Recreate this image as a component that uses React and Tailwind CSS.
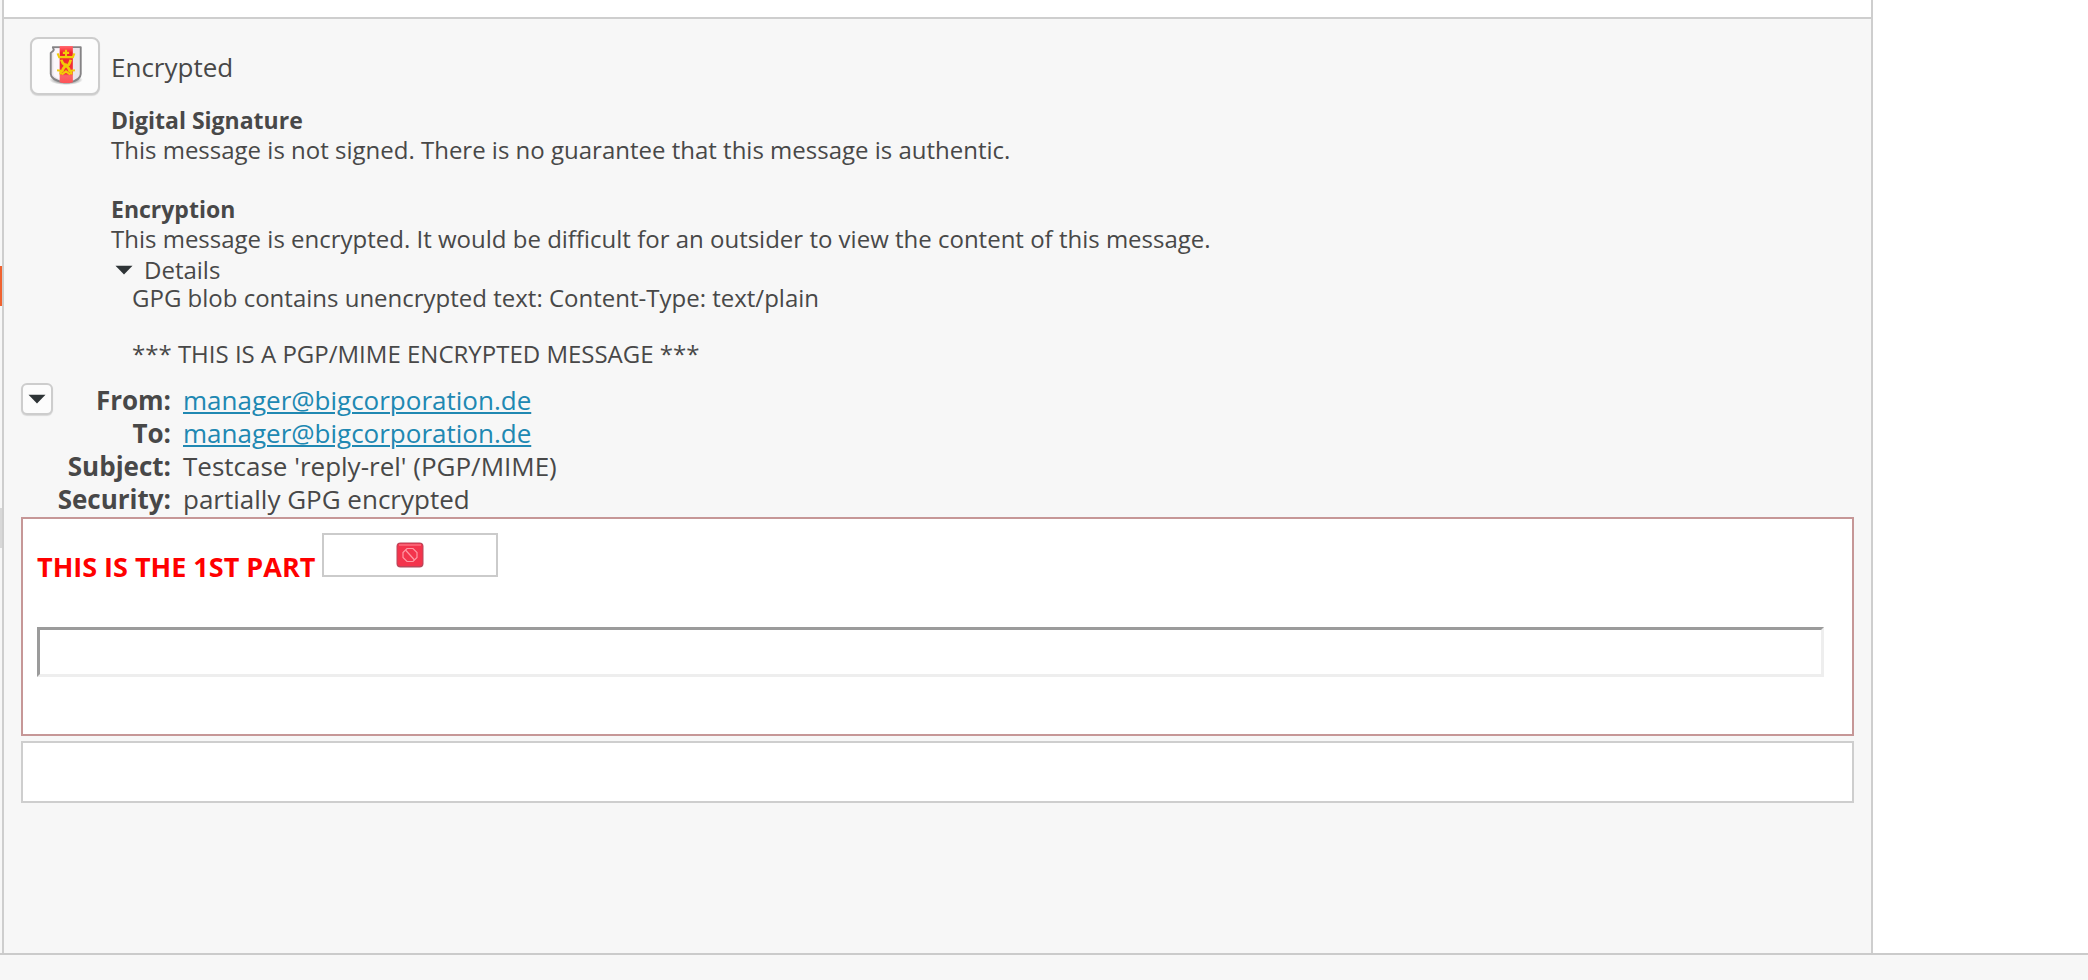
const FONT = "font-['Open_Sans','Noto_Sans',sans-serif]";

function ShieldIcon() {
  return (
    <svg viewBox="0 0 32 38" className="h-10 w-[34px]" aria-hidden="true">
      <defs>
        <radialGradient id="shade">
          <stop offset="0.4" stopColor="#444" stopOpacity="0.75" />
          <stop offset="1" stopColor="#555" stopOpacity="0" />
        </radialGradient>
        <linearGradient id="stripe" x1="0" y1="0" x2="0" y2="1">
          <stop offset="0" stopColor="#ff6a6f" />
          <stop offset="0.1" stopColor="#ff4048" />
          <stop offset="0.18" stopColor="#ee2229" />
          <stop offset="0.75" stopColor="#f4363c" />
          <stop offset="0.8" stopColor="#fb6468" />
          <stop offset="1" stopColor="#ff5257" />
        </linearGradient>
      </defs>
      <ellipse cx="16" cy="33" rx="16" ry="5" fill="url(#shade)" />
      <path
        d="M3.500 2H30v25.500C30 31 26 34 19 35.500h-5C7 34 1.500 31 1.500 27.500V7.500L4.500 5z"
        fill="#eae5ea"
        stroke="#858385"
        strokeWidth="1.800"
        strokeLinejoin="round"
      />
      <path d="M4 7.500v20c0 2 2.500 3.600 6 5V3.500H6z" fill="#fbf7fb" />
      <path d="M10 1h12.500v34.500l-3 .7h-6.500l-3-.7z" fill="url(#stripe)" />
      <g fill="none" stroke="#f2cc08" strokeWidth="2">
        <path d="M8 8l1.500 3.500h13L24 8M16 4.500v6M13 7.500h6" />
        <path d="M11.500 14c1 4 3 5 4.500 6s3.500-2 4.500-6M12 26c.5-3 2-5 4-7 2 2 3.500 4 4 7" strokeWidth="2.600" />
        <path d="M7.500 24l4 .5-1 3.500M24.500 24l-4 .5 1 3.500M12 28l4-3 4 3" />
      </g>
    </svg>
  );
}

function BlockedIcon() {
  return (
    <svg viewBox="0 0 28 26" className="h-[26px] w-7" role="img" aria-label="Blocked content">
      <rect x="0.500" y="0.500" width="27" height="25" rx="4" fill="#b8475a" />
      <rect x="1.500" y="1.500" width="25" height="22.500" rx="3" fill="#f3344c" />
      <path d="M3 3h22" stroke="#ff7c8c" strokeWidth="1.200" />
      <g fill="none" stroke="#ff98a4" strokeWidth="1.200">
        <path d="M11 6.500h6l4 4v5l-4 4h-6l-4-4v-5z" />
        <path d="M9.500 8l9 10" />
      </g>
    </svg>
  );
}

function Triangle() {
  return (
    <svg viewBox="0 0 18 10" className="h-[10px] w-[18px]" aria-hidden="true">
      <path d="M0.500 0.800h17L9 9.500z" fill="#2e3436" />
    </svg>
  );
}

const buttonStyle = "flex shrink-0 items-center justify-center border-2 border-[#cdcdcd] bg-[#fcfcfc] shadow-[0_1px_1px_rgba(0,0,0,0.12)]";

function HeaderRow({ label, children }) {
  return (
    <tr>
      <th scope="row" className="w-[130px] p-0 pr-3 text-right font-bold">{label}</th>
      <td className="p-0">{children}</td>
    </tr>
  );
}

function MailLink() {
  return (
    <a href="mailto:manager@bigcorporation.de" className="text-[#2088b2] underline decoration-2 underline-offset-2">
      manager@bigcorporation.de
    </a>
  );
}

export default function App() {
  return (
    <div className={`${FONT} flex min-h-screen flex-col bg-white text-[#484848]`}>
      <div className="flex grow">
        <div className="flex w-[2px] shrink-0 flex-col bg-[#f7f7f7]">
          <div className="mt-[266px] h-10 bg-[#f0622f]" />
          <div className="mt-[202px] h-10 bg-[#d8d8d8]" />
        </div>

        <main className="flex min-w-0 grow flex-col border-x-2 border-[#cecece] bg-[#f7f7f7]">
          <div className="h-[17px] bg-white" />
          <div className="flex flex-col border-t-2 border-[#cecece] px-[17px] pt-[18px]">
            <header className="flex items-center gap-[11px] pl-[9px]">
              <button type="button" aria-label="Encryption status" className={`${buttonStyle} h-[58px] w-[70px] rounded-lg pb-0.5 pl-0.5`}>
                <ShieldIcon />
              </button>
              <h1 className="pt-0.5 text-[26px] leading-9">Encrypted</h1>
            </header>

            <section className="mt-[10px] pl-[90px] text-[24px] leading-[30px]">
              <h2 className="text-[23px] font-bold">Digital Signature</h2>
              <p>This message is not signed. There is no guarantee that this message is authentic.</p>
              <h2 className="mt-[29px] text-[23px] font-bold">Encryption</h2>
              <p>This message is encrypted. It would be difficult for an outsider to view the content of this message.</p>
              <details open className="mt-0.5 leading-7">
                <summary className="flex items-center gap-[11px] pl-1">
                  <Triangle />
                  Details
                </summary>
                <div className="pl-[21px]">
                  <p>GPG blob contains unencrypted text: Content-Type: text/plain</p>
                  <p className="mt-7">*** THIS IS A PGP/MIME ENCRYPTED MESSAGE ***</p>
                </div>
              </details>
            </section>

            <section className="mt-[15px] flex items-start">
              <button type="button" aria-label="Toggle headers" className={`${buttonStyle} h-8 w-8 rounded-md`}>
                <Triangle />
              </button>
              <table className="mt-px text-[26px] leading-[33px]">
                <tbody>
                  <HeaderRow label="From:"><MailLink /></HeaderRow>
                  <HeaderRow label="To:"><MailLink /></HeaderRow>
                  <HeaderRow label="Subject:">Testcase 'reply-rel' (PGP/MIME)</HeaderRow>
                  <HeaderRow label="Security:">partially GPG encrypted</HeaderRow>
                </tbody>
              </table>
            </section>

            <section className="mt-px border-2 border-[#c69797] bg-white px-[14px] pt-3.5 pb-[57px]">
              <div className="flex items-start gap-[7px]">
                <strong className="pt-[18px] text-[27px] leading-8 font-bold text-[#ff0000]">THIS IS THE 1ST PART</strong>
                <div className="flex h-11 w-[176px] items-center justify-center border-2 border-[#cbcbcb] bg-white">
                  <BlockedIcon />
                </div>
              </div>
              <input
                type="text"
                aria-label="Message part"
                className="mt-11 block h-[50px] w-[calc(100%-14px)] border-3 border-t-[#9b9b9b] border-r-[#eeeeee] border-b-[#eeeeee] border-l-[#9b9b9b] bg-white px-2 text-[24px]"
              />
            </section>

            <section aria-label="Empty part" className="mt-[5px] h-[62px] border-2 border-[#cecece] bg-white" />
          </div>
        </main>

        <aside className="w-[215px] shrink-0 bg-white" />
      </div>

      <footer className="h-[27px] border-t-2 border-[#cbcbcb] bg-[#f7f7f7]" />
    </div>
  );
}
